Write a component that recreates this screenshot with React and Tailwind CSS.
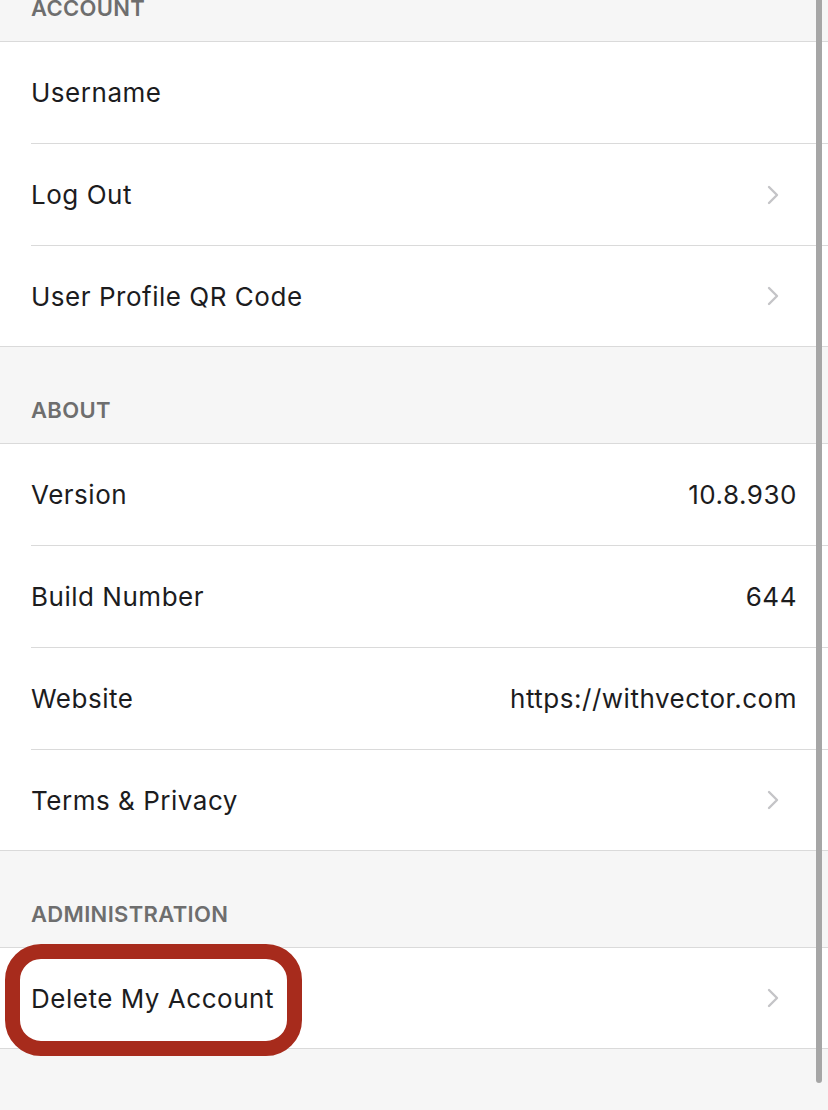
import React from 'react';

const font = { fontFamily: 'Inter, "Noto Sans", sans-serif' };

function Chevron() {
  return (
    <svg width="14" height="22" viewBox="0 0 14 22" className="mr-[16px]">
      <path d="M3 3l8 8-8 8" fill="none" stroke="#c4c4c7" strokeWidth="2.4" strokeLinecap="round" strokeLinejoin="round" />
    </svg>
  );
}

function Header({ title, first }) {
  return (
    <div className={`${first ? 'h-[42px]' : 'h-[97px]'} flex items-end pl-[31px] pb-[20px] border-b border-[#dadada] bg-[#f6f6f6]`}>
      <span className="text-[22px] leading-[26px] font-semibold tracking-[0.015em] text-[#6e6e6e]">{title}</span>
    </div>
  );
}

function Row({ label, value, chevron, last }) {
  return (
    <div className="bg-white pl-[31px]">
      <div className={`${last ? 'h-[100px]' : 'h-[102px] border-b border-[#dadada]'} flex items-center justify-between ${chevron ? 'pr-[32px]' : 'pr-[31px]'}`}>
        <span className="text-[26px] tracking-[0.02em] text-[#1c1c1e]">{label}</span>
        {value && <span className="text-[26px] tracking-[0.02em] text-[#1c1c1e]">{value}</span>}
        {chevron && <Chevron />}
      </div>
    </div>
  );
}

const sections = [
  {
    title: 'ACCOUNT',
    rows: [
      { label: 'Username' },
      { label: 'Log Out', chevron: true },
      { label: 'User Profile QR Code', chevron: true },
    ],
  },
  {
    title: 'ABOUT',
    rows: [
      { label: 'Version', value: '10.8.930' },
      { label: 'Build Number', value: '644' },
      { label: 'Website', value: 'https://withvector.com' },
      { label: 'Terms & Privacy', chevron: true },
    ],
  },
];

export default function App() {
  return (
    <div className="relative w-[828px] h-[1110px] overflow-hidden bg-[#f6f6f6]" style={font}>
      {sections.map((s, i) => (
        <div key={s.title}>
          <Header title={s.title} first={i === 0} />
          <div className="border-b border-[#dadada]">
            {s.rows.map((r, j) => (
              <Row key={r.label} {...r} last={j === s.rows.length - 1} />
            ))}
          </div>
        </div>
      ))}
      <Header title="ADMINISTRATION" />
      <div className="relative border-b border-[#dadada]">
        <Row label="Delete My Account" chevron last />
        <div className="absolute left-[5px] top-[-4px] w-[297px] h-[112px] rounded-[36px] border-[15px] border-[#a72b1c]" />
      </div>
      <div className="absolute right-[6px] top-0 w-[6px] h-[1083px] rounded-b-full bg-[#a6a6a6]" />
    </div>
  );
}
